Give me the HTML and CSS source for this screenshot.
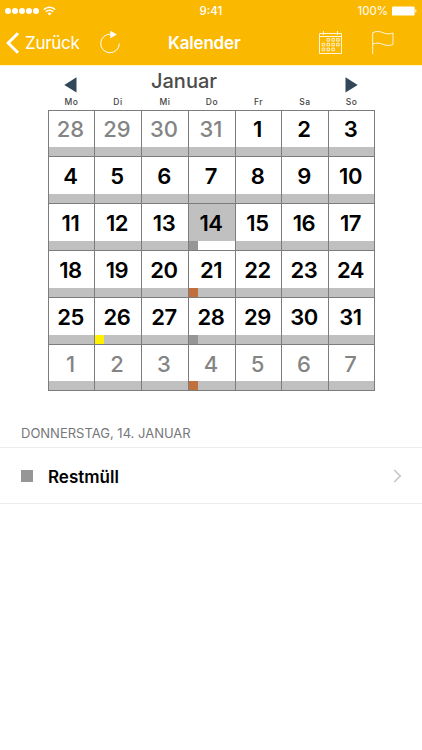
FILE: index.html
```html
<!DOCTYPE html>
<html lang="de">
<head>
    <meta charset="UTF-8">
    <meta name="viewport" content="width=device-width, initial-scale=1.0">
    <title>Kalender</title>
    <link rel="stylesheet" href="styles.css">
</head>
<body>
    <header class="header">
        <div class="status">
            <div class="signal">
                <i></i><i></i><i></i><i></i><i></i>
                <svg class="wifi" width="13" height="10" viewBox="0 0 13 10" fill="none" stroke="#fff" stroke-width="1.5">
                    <path d="M.8 3.6a8.1 8.1 0 0 1 11.4 0M2.8 5.8a5.3 5.3 0 0 1 7.4 0"/>
                    <path d="M4.5 7.5a2.9 2.9 0 0 1 4 0l-2 2.1z" fill="#fff" stroke="none"/>
                </svg>
            </div>
            <div class="time">9:41</div>
            <div class="battery">
                <span>100%</span>
                <svg width="25" height="10" viewBox="0 0 25 10" fill="#fff">
                    <rect x="0" y="0.4" width="22.6" height="9.2" rx="1.2"/>
                    <path d="M23.3 3.3q1.2.3 1.2 1.7t-1.2 1.7z"/>
                </svg>
            </div>
        </div>
        <nav class="nav">
            <a class="back" href="#">
                <svg width="14" height="22" viewBox="0 0 14 22" fill="none" stroke="#fff" stroke-width="3"><path d="M12 1.2L2.2 11l9.8 9.8"/></svg>
                <span>Zurück</span>
            </a>
            <svg class="reload" width="22" height="24" viewBox="0 0 22 24" fill="none" stroke="#fff">
                <path d="M11 4.2A9.3 9.3 0 1 0 19.3 13.5"/>
                <path d="M10.3.8v7.4l6.6-3.7z" fill="#fff" stroke="none"/>
            </svg>
            <h1>Kalender</h1>
            <svg class="cal-icon" width="24" height="24" viewBox="0 0 24 24" fill="none" stroke="#fff" stroke-opacity=".85">
                <path d="M.5 2.5h22v20H.5zM.5 5.5h22M4.5 0v4M18.5 0v4"/>
                <g stroke-width=".9">
                    <path d="M8 7.5h2.6v2.6H8zM12.8 7.5h2.6v2.6h-2.6zM17.6 7.5h2.6v2.6h-2.6z"/>
                    <path d="M3.2 12.3h2.6v2.6H3.2zM8 12.3h2.6v2.6H8zM12.8 12.3h2.6v2.6h-2.6zM17.6 12.3h2.6v2.6h-2.6z"/>
                    <path d="M3.2 17.1h2.6v2.6H3.2zM8 17.1h2.6v2.6H8zM12.8 17.1h2.6v2.6h-2.6z"/>
                </g>
            </svg>
            <svg class="flag" width="22" height="24" viewBox="0 0 22 24" fill="none" stroke="#fff" stroke-opacity=".85">
                <path d="M.7 23V1.7C4 0 8 .2 11 1.700s7 1.600 10 .3v11.500c-3 1.300-7 1.200-10-.2s-7-1.700-10.300-.1"/>
            </svg>
        </nav>
    </header>

    <main>
        <section class="calendar">
            <div class="month">
                <svg width="13" height="16" viewBox="0 0 13 16"><path d="M12.5.3v15.2L.3 7.9z" fill="#33475b"/></svg>
                <h2>Januar</h2>
                <svg width="13" height="16" viewBox="0 0 13 16"><path d="M.5.3v15.2L12.7 7.9z" fill="#33475b"/></svg>
            </div>
            <div class="weekdays">
                <span>Mo</span><span>Di</span><span>Mi</span><span>Do</span><span>Fr</span><span>Sa</span><span>So</span>
            </div>
            <div class="days">
                <div class="day other">28</div>
                <div class="day other">29</div>
                <div class="day other">30</div>
                <div class="day other">31</div>
                <div class="day">1</div>
                <div class="day">2</div>
                <div class="day">3</div>

                <div class="day">4</div>
                <div class="day">5</div>
                <div class="day">6</div>
                <div class="day">7</div>
                <div class="day">8</div>
                <div class="day">9</div>
                <div class="day">10</div>

                <div class="day">11</div>
                <div class="day">12</div>
                <div class="day">13</div>
                <div class="day selected rest">14</div>
                <div class="day">15</div>
                <div class="day">16</div>
                <div class="day">17</div>

                <div class="day">18</div>
                <div class="day">19</div>
                <div class="day">20</div>
                <div class="day bio">21</div>
                <div class="day">22</div>
                <div class="day">23</div>
                <div class="day">24</div>

                <div class="day">25</div>
                <div class="day yellow">26</div>
                <div class="day">27</div>
                <div class="day rest">28</div>
                <div class="day">29</div>
                <div class="day">30</div>
                <div class="day">31</div>

                <div class="day other">1</div>
                <div class="day other">2</div>
                <div class="day other">3</div>
                <div class="day other bio">4</div>
                <div class="day other">5</div>
                <div class="day other">6</div>
                <div class="day other">7</div>
            </div>
        </section>

        <section class="events">
            <h3>DONNERSTAG, 14. JANUAR</h3>
            <a class="event" href="#">
                <span class="color"></span>
                <span class="name">Restmüll</span>
                <svg width="9" height="14" viewBox="0 0 9 14" fill="none" stroke="#c7c7cc" stroke-width="1.7"><path d="M1.2 1l6 6-6 6"/></svg>
            </a>
        </section>
    </main>
</body>
</html>
```

FILE: styles.css
```css
:root {
    --yellow: #fbb800;
    --line: #7c7c7c;
    --bar: #c0c0c0;
}
* { box-sizing: border-box; }
body {
    margin: 0;
    background: #fff;
    font-family: Inter, "Liberation Sans", sans-serif;
    color: #000;
}
h1, h2, h3 { margin: 0; }
a { color: inherit; text-decoration: none; }
svg { display: block; flex: none; }

/* header */
.header {
    height: 66px;
    background: var(--yellow);
    border-bottom: 1px solid #fff8c8;
    color: #fff;
}
.status {
    display: grid;
    grid-template-columns: 1fr 60px 1fr;
    align-items: center;
    height: 22px;
    padding: 0 5px;
}
.signal {
    display: flex;
    align-items: center;
    gap: 1px;
}
.signal i {
    width: 6px;
    height: 6px;
    border-radius: 50%;
    background: #fff;
}
.wifi { margin-left: 3px; }
.time {
    font-size: 11.5px;
    font-weight: 500;
    text-align: center;
}
.battery {
    display: flex;
    align-items: center;
    justify-content: flex-end;
    gap: 4px;
    font-size: 11.5px;
}
.nav {
    display: flex;
    align-items: center;
    height: 42px;
    padding-left: 6px;
}
.back {
    display: flex;
    align-items: center;
    gap: 5px;
    width: 94px;
    font-size: 17px;
    letter-spacing: -0.3px;
}
.reload { margin-top: -2px; }
.nav h1 {
    width: 74px;
    margin-left: 46px;
    font-size: 17px;
    font-weight: 600;
    letter-spacing: -0.2px;
    white-space: nowrap;
}
.cal-icon { margin-left: 77px; }
.flag { margin-left: 29px; }

/* calendar */
.calendar {
    width: 327px;
    margin-left: 48px;
}
.month {
    display: flex;
    align-items: center;
    height: 30px;
    padding: 0 17px 0 16px;
}
.month svg { margin-top: 8px; }
.month h2 {
    flex: 1;
    padding-left: 74px;
    font-size: 20px;
    font-weight: 500;
    color: #4c4c4c;
}
.weekdays, .days {
    display: grid;
    grid-template-columns: 45px 46px 46px 46px 45px 46px 45px;
    column-gap: 1px;
    padding: 0 1px;
}
.weekdays {
    height: 14px;
    font-size: 8.5px;
    font-weight: 500;
    line-height: 13px;
    letter-spacing: 0.5px;
    text-align: center;
    color: #444;
}
.days {
    grid-template-rows: 45px 46px 46px 46px 46px 45px;
    gap: 1px;
    padding: 1px;
    background: var(--line);
}
.day {
    display: flex;
    flex-direction: column;
    justify-content: space-between;
    background: #fff;
    font-size: 22px;
    font-weight: 600;
    line-height: 39px;
    letter-spacing: -0.4px;
    text-align: center;
    text-indent: -2px;
}
.day:nth-child(-n+7) { line-height: 37px; }
.day::after {
    content: "";
    flex: none;
    height: 9px;
    margin-top: -4px;
    background: var(--bar);
}
.other {
    font-weight: 500;
    letter-spacing: 0;
    color: #848484;
}
.selected { background: var(--bar); }
.rest::after { background: linear-gradient(90deg, #969696 9px, var(--bar) 9px); }
.bio::after { background: linear-gradient(90deg, #c1703d 9px, var(--bar) 9px); }
.yellow::after { background: linear-gradient(90deg, #fff000 9px, var(--bar) 9px); }
.selected::after { background: linear-gradient(90deg, #969696 9px, #fff 9px); }

/* events of the selected day */
.events { padding-top: 34px; }
.events h3 {
    height: 22px;
    padding-left: 21px;
    font-size: 13px;
    font-weight: 400;
    line-height: 16px;
    color: #77777b;
}
.event {
    display: flex;
    align-items: center;
    height: 57px;
    padding: 0 20px 0 21px;
    border-top: 1px solid #ececec;
    border-bottom: 1px solid #ececec;
}
.color {
    width: 12px;
    height: 12px;
    background: #969696;
}
.name {
    flex: 1;
    margin: 2px 0 0 15px;
    font-size: 17px;
    font-weight: 600;
}
```
